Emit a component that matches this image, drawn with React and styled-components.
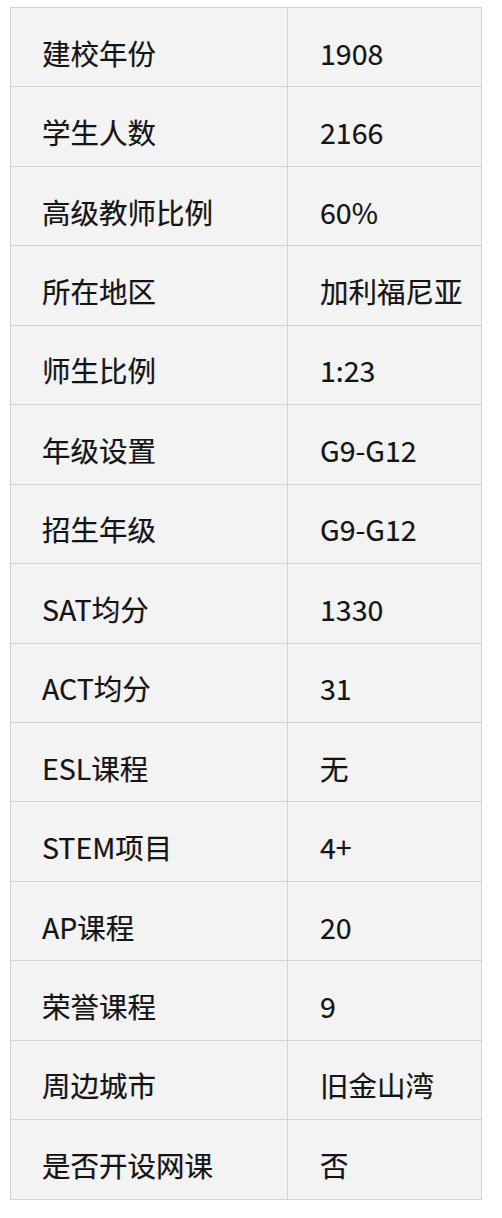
import React from 'react';
import styled, { createGlobalStyle } from 'styled-components';

const bgC = '#f3f3f3';
const borderC = '#d2d2d2';
const textC = '#141414';

const GlobalStyle = createGlobalStyle`
    html, body {
        margin: 0;
        padding: 0;
        background: #fff;
    }
    body {
        font-family: "Noto Sans CJK SC", "Noto Sans", sans-serif;
    }
`;

const Page = styled.div`
    padding: 7px 0 0 10px;
`;

const Table = styled.table`
    width: 471px;
    border-collapse: collapse;
    table-layout: fixed;
    background: ${bgC};
`;

const Col = styled.col`
    width: ${(p) => p.w}px;
`;

const Row = styled.tr`
    height: 79.45px;
`;

const Cell = styled.td`
    box-sizing: border-box;
    border: 1px solid ${borderC};
    padding: 10px 0 0 ${(p) => (p.value ? '32px' : '31px')};
    font-size: 28.5px;
    line-height: 1.3;
    color: ${textC};
    white-space: nowrap;
    vertical-align: middle;
    -webkit-text-stroke: 0.2px ${textC};
`;

const rows = [
    ['建校年份', '1908'],
    ['学生人数', '2166'],
    ['高级教师比例', '60%'],
    ['所在地区', '加利福尼亚'],
    ['师生比例', '1:23'],
    ['年级设置', 'G9-G12'],
    ['招生年级', 'G9-G12'],
    ['SAT均分', '1330'],
    ['ACT均分', '31'],
    ['ESL课程', '无'],
    ['STEM项目', '4+'],
    ['AP课程', '20'],
    ['荣誉课程', '9'],
    ['周边城市', '旧金山湾'],
    ['是否开设网课', '否'],
];

export default function App() {
    return (
        <Page>
            <GlobalStyle />
            <Table>
                <colgroup>
                    <Col w={277} />
                    <Col w={194} />
                </colgroup>
                <tbody>
                    {rows.map(([label, value]) => (
                        <Row key={label}>
                            <Cell>{label}</Cell>
                            <Cell value>{value}</Cell>
                        </Row>
                    ))}
                </tbody>
            </Table>
        </Page>
    );
}
